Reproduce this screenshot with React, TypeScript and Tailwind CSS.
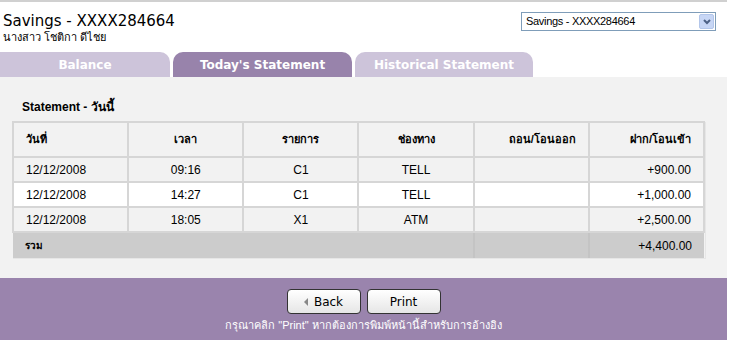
const rows = [
  { date: '12/12/2008', time: '09:16', code: 'C1', ch: 'TELL', out: '', inn: '+900.00', bg: 'bg-[#f2f2f2]' },
  { date: '12/12/2008', time: '14:27', code: 'C1', ch: 'TELL', out: '', inn: '+1,000.00', bg: 'bg-white' },
  { date: '12/12/2008', time: '18:05', code: 'X1', ch: 'ATM', out: '', inn: '+2,500.00', bg: 'bg-[#f2f2f2]' },
];

const cell = 'border-2 border-[#d6d6d6] px-[12px]';

export default function App() {
  return (
    <div className="w-[734px] h-[361px] bg-white text-black font-['Liberation_Sans',sans-serif] overflow-hidden">
      <div className="w-[727px] border-t-2 border-[#d0d0d0]">
        {/* Header */}
        <div className="flex items-start justify-between h-[50px] pt-[10px]">
          <div className="pl-[3px]">
            <h1 className="text-[15px] leading-[19px] font-['DejaVu_Sans',sans-serif]">Savings - XXXX284664</h1>
            <p className="text-[11px] leading-[12px]">นางสาว โชติกา ดีไชย</p>
          </div>
          <div className="mr-[11px] flex items-center w-[195px] h-[19px] border border-[#7f9db9] bg-white">
            <span className="flex-1 pl-[4px] text-[11px] leading-[17px] tracking-[-0.3px]">Savings - XXXX284664</span>
            <span className="w-[15px] h-[15px] mr-[1px] rounded-[2px] bg-[#c7d6f5] border border-[#b3c6ea] flex items-center justify-center">
              <svg width="8" height="6" viewBox="0 0 8 6"><path d="M1 1 L4 4 L7 1" stroke="#4d6185" strokeWidth="2" fill="none" /></svg>
            </span>
          </div>
        </div>

        {/* Tabs */}
        <div className="flex gap-[3px] h-[25px] font-['DejaVu_Sans',sans-serif] text-[12px] font-bold text-white">
          <div className="w-[170px] rounded-tr-[10px] bg-[#cdc4da] flex items-center justify-center">Balance</div>
          <div className="w-[179px] rounded-t-[10px] bg-[#9883ab] flex items-center justify-center">Today's Statement</div>
          <div className="w-[178px] rounded-t-[10px] bg-[#cdc4da] flex items-center justify-center">Historical Statement</div>
        </div>

        {/* Content */}
        <div className="bg-[#f2f2f2] h-[201px] pt-[23px] pl-[12px]">
          <p className="pl-[10px] text-[12px] font-bold leading-[14px] mb-[7px]">Statement - วันนี้</p>
          <table className="w-[693px] table-fixed border-collapse text-[12px] shadow-[1px_1px_0_#e6e6e6]">
            <thead>
              <tr className="h-[35px] bg-[#f2f2f2] font-bold text-[11px]">
                <th className={`${cell} text-left font-bold`}>วันที่</th>
                <th className={`${cell} font-bold`}>เวลา</th>
                <th className={`${cell} font-bold`}>รายการ</th>
                <th className={`${cell} font-bold`}>ช่องทาง</th>
                <th className={`${cell} text-right font-bold`}>ถอน/โอนออก</th>
                <th className={`${cell} text-right font-bold`}>ฝาก/โอนเข้า</th>
              </tr>
            </thead>
            <tbody>
              {rows.map((r, i) => (
                <tr key={i} className={`h-[25px] ${r.bg}`}>
                  <td className={cell}>{r.date}</td>
                  <td className={`${cell} text-center`}>{r.time}</td>
                  <td className={`${cell} text-center`}>{r.code}</td>
                  <td className={`${cell} text-center`}>{r.ch}</td>
                  <td className={`${cell} text-right`}>{r.out}</td>
                  <td className={`${cell} text-right`}>{r.inn}</td>
                </tr>
              ))}
              <tr className="h-[26px] bg-[#cccccc]">
                <td colSpan={4} className="px-[12px] text-[10px] font-bold border-r-2 border-[#c4c4c4]">รวม</td>
                <td className="border-r-2 border-[#c4c4c4]"></td>
                <td className="px-[12px] text-right">+4,400.00</td>
              </tr>
            </tbody>
          </table>
        </div>

        {/* Footer */}
        <div className="bg-[#9a84ad] h-[62px] flex flex-col items-center pt-[11px]">
          <div className="flex gap-[6px] font-['DejaVu_Sans',sans-serif] text-[12px]">
            <button className="w-[74px] h-[25px] rounded-[4px] border border-[#333] bg-gradient-to-b from-white to-[#e6e6e6] flex items-center justify-center gap-[6px]">
              <svg width="4" height="8" viewBox="0 0 4 8"><path d="M4 0 L0 4 L4 8 Z" fill="#888" /></svg>
              Back
            </button>
            <button className="w-[74px] h-[25px] rounded-[4px] border border-[#333] bg-gradient-to-b from-white to-[#e6e6e6]">Print</button>
          </div>
          <p className="mt-[5px] text-[11px] leading-[13px] text-white">กรุณาคลิก "Print" หากต้องการพิมพ์หน้านี้สำหรับการอ้างอิง</p>
        </div>
      </div>
    </div>
  );
}
